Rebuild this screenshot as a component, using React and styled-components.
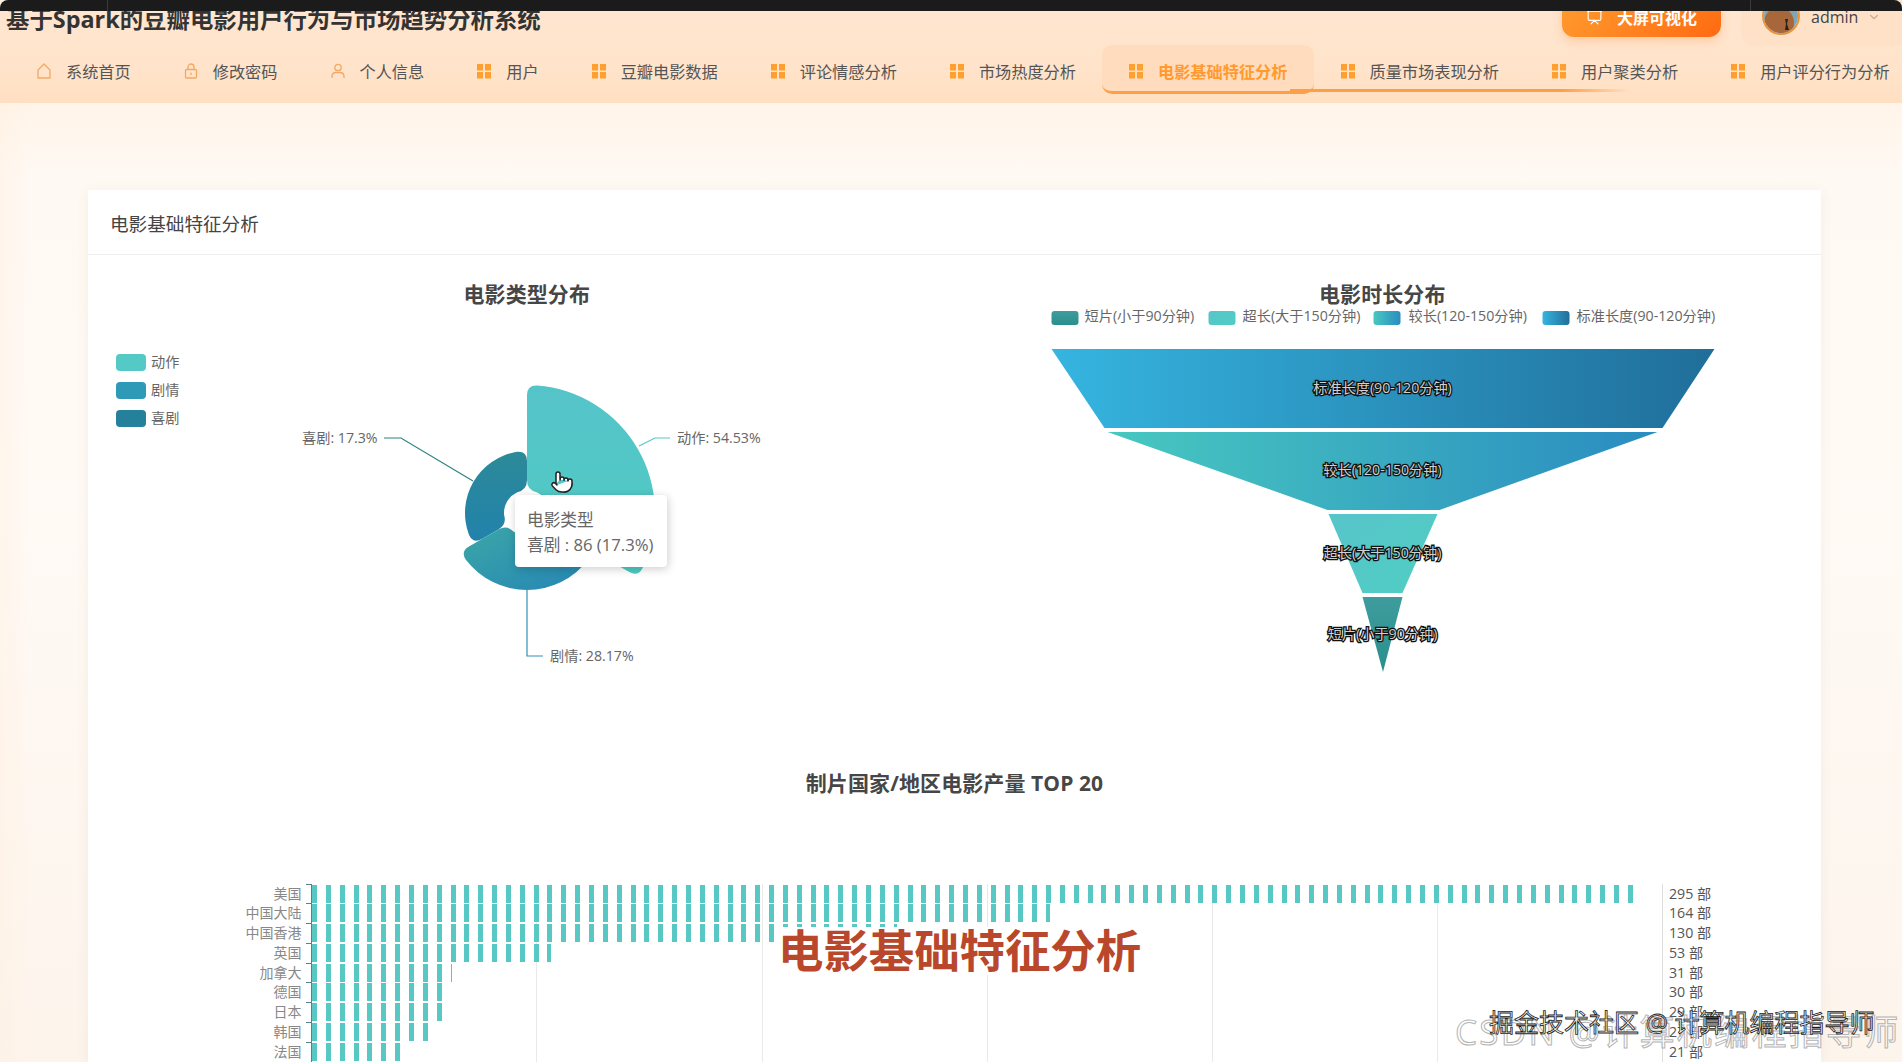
import styled, { createGlobalStyle } from "styled-components";
import { Pointer, Presentation, ChevronDown } from "lucide-react";

const GlobalStyle = createGlobalStyle`
  html, body {
    margin: 0;
    padding: 0;
  }
  body {
    font-family: "Open Sans", "Noto Sans CJK SC", sans-serif;
    color: #555;
  }
  * {
    box-sizing: border-box;
  }
`;

const navItems = [
  { label: "系统首页", icon: "home" },
  { label: "修改密码", icon: "lock" },
  { label: "个人信息", icon: "user" },
  { label: "用户", icon: "grid" },
  { label: "豆瓣电影数据", icon: "grid" },
  { label: "评论情感分析", icon: "grid" },
  { label: "市场热度分析", icon: "grid" },
  { label: "电影基础特征分析", icon: "grid", active: true },
  { label: "质量市场表现分析", icon: "grid" },
  { label: "用户聚类分析", icon: "grid" },
  { label: "用户评分行为分析", icon: "grid" },
];

const countries = [
  { name: "美国", value: 295 },
  { name: "中国大陆", value: 164 },
  { name: "中国香港", value: 130 },
  { name: "英国", value: 53 },
  { name: "加拿大", value: 31 },
  { name: "德国", value: 30 },
  { name: "日本", value: 29 },
  { name: "韩国", value: 27 },
  { name: "法国", value: 21 },
];

function NavIcon({ type }) {
  if (type === "grid") {
    return (
      <svg width="16" height="16" viewBox="0 0 16 16">
        <g fill="#ff9f2e">
          <rect x="1" y="1" width="6" height="6.5" />
          <rect x="9" y="1" width="6" height="6.5" />
          <rect x="1" y="9" width="6" height="6.5" />
          <rect x="9" y="9" width="6" height="6.5" />
        </g>
      </svg>
    );
  }
  return (
    <svg width="16" height="16" viewBox="0 0 16 16" fill="none" stroke="#f2a963" strokeWidth="1.3">
      {type === "home" && <path d="M2 7 L8 1 L14 7 V15 H2 Z" strokeLinejoin="round" />}
      {type === "lock" && (
        <>
          <rect x="2.5" y="6.5" width="11" height="8.5" rx="1" />
          <path d="M5 6.5 V4 a3 3 0 0 1 6 0 V6.5" />
          <path d="M8 9.5 V12" />
        </>
      )}
      {type === "user" && (
        <>
          <circle cx="8" cy="4.5" r="3.2" />
          <path d="M2 15 V13 a4 4 0 0 1 4 -3.5 h4 a4 4 0 0 1 4 3.5 V15" />
        </>
      )}
    </svg>
  );
}

// rose sector with rounded corners, angles clockwise from 12 o'clock
function roseSector(cx, cy, r0, r1, a0, a1, c) {
  const pt = (r, deg) => {
    const t = (deg * Math.PI) / 180;
    return `${(cx + r * Math.sin(t)).toFixed(2)} ${(cy - r * Math.cos(t)).toFixed(2)}`;
  };
  const d1 = (c / r1) * (180 / Math.PI);
  const d0 = (c / r0) * (180 / Math.PI);
  return [
    `M ${pt(r1, a0 + d1)}`,
    `A ${r1} ${r1} 0 0 1 ${pt(r1, a1 - d1)}`,
    `Q ${pt(r1, a1)} ${pt(r1 - c, a1)}`,
    `L ${pt(r0 + c, a1)}`,
    `Q ${pt(r0, a1)} ${pt(r0, a1 - d0)}`,
    `A ${r0} ${r0} 0 0 0 ${pt(r0, a0 + d0)}`,
    `Q ${pt(r0, a0)} ${pt(r0 + c, a0)}`,
    `L ${pt(r1 - c, a0)}`,
    `Q ${pt(r1, a0)} ${pt(r1, a0 + d1)}`,
    "Z",
  ].join(" ");
}

function TypeChart() {
  return (
    <ChartCanvas viewBox="108 311 837.5 454">
      <defs>
        <linearGradient id="roseAction" x1="0" y1="0" x2="0" y2="1">
          <stop offset="0" stopColor="#55c4ca" />
          <stop offset="1" stopColor="#4fcbc3" />
        </linearGradient>
        <linearGradient id="roseDrama" x1="0" y1="0" x2="1" y2="1">
          <stop offset="0" stopColor="#3ba7a7" />
          <stop offset="1" stopColor="#2585b5" />
        </linearGradient>
        <linearGradient id="roseComedy" x1="0" y1="0" x2="0" y2="1">
          <stop offset="0" stopColor="#2c8a98" />
          <stop offset="1" stopColor="#2282ab" />
        </linearGradient>
      </defs>

      {[
        ["动作", "#55c9c6", 354],
        ["剧情", "#2f9ab8", 382],
        ["喜剧", "#25809c", 410],
      ].map(([name, color, y]) => (
        <g key={name}>
          <rect x="116" y={y} width="30" height="17" rx="4" fill={color} />
          <LegendText x="151" y={y + 13}>{name}</LegendText>
        </g>
      ))}

      <path d={roseSector(527, 513, 23, 128, 0, 120, 10)} fill="url(#roseAction)" />
      <path d={roseSector(527, 513, 23, 62, 240, 360, 10)} fill="url(#roseComedy)" />
      <path d={roseSector(527, 513, 23, 77, 120, 240, 10)} fill="url(#roseDrama)" />

      <polyline points="384,438 401,438 473,481" fill="none" stroke="#2c8282" strokeWidth="1.2" />
      <polyline points="639,446 655,438 670,438" fill="none" stroke="#55c9c6" strokeWidth="1.2" />
      <polyline points="527,589 527,656 543,656" fill="none" stroke="#2f93b8" strokeWidth="1.2" />
      <LegendText x="302" y="443">喜剧: 17.3%</LegendText>
      <LegendText x="677" y="443">动作: 54.53%</LegendText>
      <LegendText x="550" y="661">剧情: 28.17%</LegendText>
    </ChartCanvas>
  );
}

const durationLegend = [
  { label: "短片(小于90分钟)", x: 1051, textX: 1084, fill: "url(#funnelShort)" },
  { label: "超长(大于150分钟)", x: 1208, textX: 1242, fill: "url(#funnelLong)" },
  { label: "较长(120-150分钟)", x: 1373, textX: 1408, fill: "url(#funnelMid)" },
  { label: "标准长度(90-120分钟)", x: 1542, textX: 1576, fill: "url(#funnelStd)" },
];

function DurationChart() {
  return (
    <ChartCanvas viewBox="963.5 311 837.5 454">
      <defs>
        <linearGradient id="funnelStd">
          <stop offset="0" stopColor="#35b5e0" />
          <stop offset="1" stopColor="#206e9a" />
        </linearGradient>
        <linearGradient id="funnelMid">
          <stop offset="0" stopColor="#48c8c0" />
          <stop offset="1" stopColor="#2a8cc0" />
        </linearGradient>
        <linearGradient id="funnelLong" x1="0" y1="0" x2="1" y2="1">
          <stop offset="0" stopColor="#58c4cb" />
          <stop offset="1" stopColor="#4fcec2" />
        </linearGradient>
        <linearGradient id="funnelShort" x1="0" y1="0" x2="0" y2="1">
          <stop offset="0" stopColor="#3f9c9e" />
          <stop offset="1" stopColor="#2a8f8c" />
        </linearGradient>
      </defs>

      {durationLegend.map((item) => (
        <g key={item.label}>
          <rect x={item.x} y="311" width="27" height="14" rx="3" fill={item.fill} />
          <LegendText x={item.textX} y="321">{item.label}</LegendText>
        </g>
      ))}

      <polygon points="1051,349 1714,349 1662,428 1104,428" fill="url(#funnelStd)" />
      <polygon points="1107,432 1657,432 1439,510 1327,510" fill="url(#funnelMid)" />
      <polygon points="1328,514 1437,514 1402,593 1362,593" fill="url(#funnelLong)" />
      <polygon points="1362,597 1402,597 1382.5,672" fill="url(#funnelShort)" />

      <FunnelLabel x="1382" y="393">标准长度(90-120分钟)</FunnelLabel>
      <FunnelLabel x="1382" y="475">较长(120-150分钟)</FunnelLabel>
      <FunnelLabel x="1382" y="558">超长(大于150分钟)</FunnelLabel>
      <FunnelLabel x="1382" y="639">短片(小于90分钟)</FunnelLabel>
    </ChartCanvas>
  );
}

export default function App() {
  return (
    <Page>
      <GlobalStyle />
      <TopBar />
      <Header>
        <HeaderTop>
          <SiteTitle>基于Spark的豆瓣电影用户行为与市场趋势分析系统</SiteTitle>
          <HeaderRight>
            <ScreenButton>
              <Presentation size={17} strokeWidth={1.6} />
              大屏可视化
            </ScreenButton>
            <UserBox>
              <Avatar>
                <svg width="34" height="34" viewBox="0 0 34 34">
                  <rect width="34" height="34" fill="#7fa6b3" />
                  <ellipse cx="15" cy="24" rx="15" ry="16" fill="#a8673a" />
                  <path d="M21 20 L24 20 L23 25 L25 31 L21 31 L22 25 Z" fill="#2b211c" />
                </svg>
              </Avatar>
              <UserName>admin</UserName>
              <UserChevron>
                <ChevronDown size={14} color="#c4ae9a" />
              </UserChevron>
            </UserBox>
          </HeaderRight>
        </HeaderTop>
        <Nav>
          {navItems.map((item) => (
            <NavItem key={item.label} $active={item.active}>
              <NavIcon type={item.icon} />
              {item.label}
            </NavItem>
          ))}
          <ActiveGlow />
        </Nav>
      </Header>

      <Main>
        <Card>
          <CardHead>电影基础特征分析</CardHead>
          <CardBody>
            <ChartGrid>
              <ChartPanel>
                <ChartTitle>电影类型分布</ChartTitle>
                <TypeChart />
                <HandCursor>
                  <Pointer size={24} strokeWidth={1.5} color="#222" fill="#fff" />
                </HandCursor>
                <Tooltip>
                  <div>电影类型</div>
                  <div>喜剧 : 86 (17.3%)</div>
                </Tooltip>
              </ChartPanel>
              <ChartPanel>
                <ChartTitle>电影时长分布</ChartTitle>
                <DurationChart />
              </ChartPanel>
            </ChartGrid>

            <ChartTitle>制片国家/地区电影产量 TOP 20</ChartTitle>
            <BarList>
              {countries.map((row) => (
                <BarRow key={row.name}>
                  <BarLabel>{row.name}</BarLabel>
                  <BarTrack>
                    <Bar style={{ width: `${(row.value / 300) * 100}%` }} />
                  </BarTrack>
                  <BarValue>{row.value} 部</BarValue>
                </BarRow>
              ))}
            </BarList>
          </CardBody>
        </Card>
      </Main>

      <Caption>电影基础特征分析</Caption>
      <WatermarkBack>CSDN @计算机编程指导师</WatermarkBack>
      <WatermarkFront>掘金技术社区 @ 计算机编程指导师</WatermarkFront>
    </Page>
  );
}

const Page = styled.div`
  position: relative;
  width: 1902px;
  height: 1062px;
  overflow: hidden;
  background:
    linear-gradient(90deg, rgba(255, 238, 220, 0.35) 0, rgba(255, 238, 220, 0) 30px),
    linear-gradient(180deg, #fff4e8 100px, #fff9f3 170px, #fffaf5 500px, #fdf4ec 100%);
`;

const TopBar = styled.div`
  position: relative;
  z-index: 5;
  height: 10.5px;
  background:
    linear-gradient(#3a3a3a, #3a3a3a) 107px 0 / 1px 100% no-repeat,
    linear-gradient(#3a3a3a, #3a3a3a) 1750px 0 / 1px 100% no-repeat,
    #1b1b1b;
  border-radius: 8px 8px 0 0;
`;

const Header = styled.header`
  background: linear-gradient(180deg, #ffe6d0 0%, #ffe4cb 60%, #ffdfc2 100%);
`;

const HeaderTop = styled.div`
  height: 34.5px;
  display: flex;
  align-items: flex-end;
  justify-content: space-between;
`;

const SiteTitle = styled.div`
  margin: 0 0 14px 6px;
  font-size: 23.4px;
  line-height: 24px;
  font-weight: 700;
  color: #333;
  white-space: nowrap;
`;

const HeaderRight = styled.div`
  display: flex;
  align-items: flex-end;
  gap: 20px;
`;

const ScreenButton = styled.div`
  width: 159px;
  height: 40px;
  margin-bottom: 8px;
  padding-left: 24px;
  display: flex;
  align-items: center;
  gap: 14px;
  border-radius: 12px;
  background: linear-gradient(135deg, #ff9d2f, #ff6a12);
  box-shadow: 0 4px 10px rgba(255, 120, 30, 0.25);
  color: #fff;
  font-size: 16px;
  font-weight: 700;
`;

const UserBox = styled.div`
  width: 161px;
  height: 55px;
  padding: 0 0 10px 21px;
  display: flex;
  align-items: flex-end;
  border-radius: 0 0 0 12px;
  background: #ffe1c8;
`;

const Avatar = styled.div`
  width: 38px;
  height: 38px;
  border-radius: 50%;
  border: 2px solid #e8953f;
  overflow: hidden;
  flex: none;
  line-height: 0;
`;

const UserName = styled.span`
  margin: 0 9px 6px 11px;
  font-size: 16px;
  line-height: 24px;
  color: #444;
`;

const UserChevron = styled.span`
  margin-bottom: 11px;
  line-height: 0;
`;

const Nav = styled.nav`
  position: relative;
  height: 58px;
  padding-left: 10px;
  display: flex;
  align-items: flex-start;
  white-space: nowrap;
  overflow: hidden;
`;

const NavItem = styled.div`
  flex: none;
  height: 49px;
  padding: 6px 26px 0;
  display: flex;
  align-items: center;
  gap: 14px;
  font-size: 16.2px;
  font-weight: ${(props) => (props.$active ? 700 : 400)};
  color: ${(props) => (props.$active ? "#ff9a2e" : "#555")};
  border-bottom: 3px solid ${(props) => (props.$active ? "#ff9f45" : "transparent")};
  border-radius: ${(props) => (props.$active ? "10px" : "0")};
  background: ${(props) => (props.$active ? "#ffdcbd" : "transparent")};
`;

const ActiveGlow = styled.div`
  position: absolute;
  left: 1290px;
  top: 44px;
  width: 340px;
  height: 3px;
  background: linear-gradient(90deg, #ff9f45 80%, rgba(255, 159, 69, 0));
`;

const Main = styled.main`
  padding: 87px 81px 0 88px;
`;

const Card = styled.section`
  background: #fff;
  box-shadow: 0 2px 12px rgba(120, 80, 40, 0.07);
`;

const CardHead = styled.div`
  height: 65px;
  padding: 0 22px;
  display: flex;
  align-items: center;
  border-bottom: 1px solid #eeeeee;
  font-size: 18.6px;
  color: #444;
`;

const CardBody = styled.div`
  padding: 19.5px 20px 0;
`;

const ChartGrid = styled.div`
  display: grid;
  grid-template-columns: 1fr 1fr;
  column-gap: 18px;
`;

const ChartPanel = styled.div`
  position: relative;
  height: 489px;
`;

const ChartTitle = styled.div`
  height: 36px;
  display: flex;
  align-items: center;
  justify-content: center;
  font-size: 21px;
  letter-spacing: 0.1px;
  font-weight: 700;
  color: #464646;
`;

const ChartCanvas = styled.svg`
  display: block;
  width: 100%;
  height: 454px;
  overflow: visible;
`;

const LegendText = styled.text`
  font-size: 14.2px;
  fill: #666;
`;

const FunnelLabel = styled.text`
  font-size: 14.2px;
  text-anchor: middle;
  fill: #d0d0d0;
  stroke: #111;
  stroke-width: 2.6px;
  paint-order: stroke;
`;

const Tooltip = styled.div`
  position: absolute;
  left: 407px;
  top: 220px;
  width: 152px;
  padding: 12px 0 10px 12px;
  background: #fff;
  border-radius: 4px;
  box-shadow: 1px 2px 10px rgba(0, 0, 0, 0.2);
  font-size: 16.7px;
  line-height: 25px;
  color: #666;
  white-space: nowrap;
`;

const HandCursor = styled.div`
  position: absolute;
  left: 442px;
  top: 195px;
  z-index: 2;
  line-height: 0;
`;

const BarList = styled.div`
  margin-top: 84px;
`;

const BarRow = styled.div`
  height: 19.8px;
  display: flex;
`;

const BarLabel = styled.div`
  width: 193.5px;
  text-align: right;
  font-size: 14px;
  line-height: 19.8px;
  color: #888;
`;

const BarTrack = styled.div`
  position: relative;
  width: 1352px;
  margin-left: 9.5px;
  padding: 1px 0;
  border-left: 1px solid #5f7f88;
  border-right: 1px solid #dddddd;
  background: repeating-linear-gradient(90deg, transparent 0 224.3px, #e9e9e9 224.3px 225.3px);

  &::before {
    content: "";
    position: absolute;
    left: -6px;
    top: 0;
    width: 6px;
    height: 1px;
    background: #5f7f88;
  }
`;

const Bar = styled.div`
  height: 18px;
  background: repeating-linear-gradient(90deg, #58c8c5 0 5px, transparent 5px 13.85px);
`;

const BarValue = styled.div`
  margin-left: 6px;
  font-size: 14.2px;
  line-height: 19.8px;
  color: #555;
  white-space: nowrap;
`;

const Caption = styled.div`
  position: absolute;
  left: 776px;
  top: 927px;
  width: 372px;
  height: 48px;
  padding-left: 2px;
  background: #fff;
  font-size: 45.4px;
  line-height: 46px;
  font-weight: 700;
  color: #b8472c;
  white-space: nowrap;
`;

const WatermarkBack = styled.div`
  position: absolute;
  left: 1455px;
  top: 1008px;
  font-size: 35px;
  line-height: 48px;
  letter-spacing: 2.3px;
  color: rgba(255, 255, 255, 0.4);
  -webkit-text-stroke: 1px #b4b4b4;
  white-space: nowrap;
`;

const WatermarkFront = styled.div`
  position: absolute;
  left: 1489px;
  top: 1004px;
  font-size: 25px;
  line-height: 36px;
  color: #f2f2f2;
  -webkit-text-stroke: 0.8px #1a1a1a;
  white-space: nowrap;
`;
